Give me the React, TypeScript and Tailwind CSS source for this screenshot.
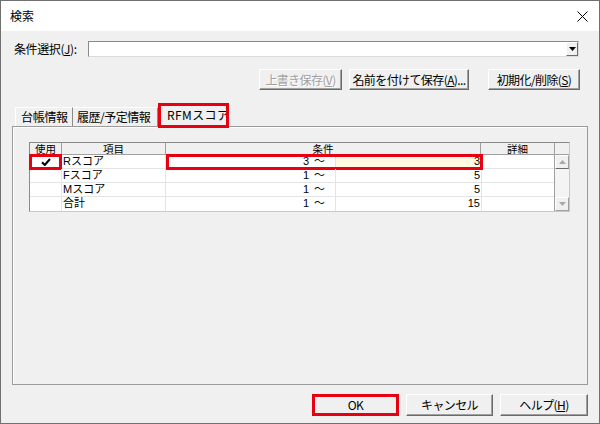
import React from 'react';

const font = "font-['Noto_Sans_CJK_JP','Noto_Sans_CJK_SC',sans-serif]";
const gridFont = "font-['Liberation_Sans','Noto_Sans_CJK_JP',sans-serif]";

const RedBox = ({ className = '' }: { className?: string }) => (
  <div className={`pointer-events-none absolute border-[3px] border-[#e60012] ${className}`} />
);

const Btn = ({ children, w, disabled = false }: { children: React.ReactNode; w: string; disabled?: boolean }) => (
  <div
    className={`${w} h-full flex items-center justify-center whitespace-nowrap bg-[#f0f0f0] border border-t-white border-l-white border-r-[#6b6b6b] border-b-[#6b6b6b] shadow-[inset_-1px_-1px_0_#a0a0a0] text-[12px] leading-none tracking-[-0.6px] ${
      disabled ? 'text-[#a0a0a0] [text-shadow:1px_1px_0_#fff]' : 'text-black'
    }`}
  >
    {children}
  </div>
);

const Tri = ({ up, color }: { up?: boolean; color: string }) => (
  <svg width="7" height="4" viewBox="0 0 7 4">
    <path d={up ? 'M0 4 L3.5 0 L7 4 Z' : 'M0 0 L7 0 L3.5 4 Z'} fill={color} />
  </svg>
);

const rows = [
  { used: true, name: 'Rスコア', from: '3', to: '3' },
  { used: false, name: 'Fスコア', from: '1', to: '5' },
  { used: false, name: 'Mスコア', from: '1', to: '5' },
  { used: false, name: '合計', from: '1', to: '15' },
];

const Check = () => (
  <svg width="10" height="8" viewBox="0 0 10 8">
    <path d="M1 4.2 L3.8 7 L9 1" stroke="#000" strokeWidth="2" fill="none" />
  </svg>
);

export default function App() {
  return (
    <div className={`w-[600px] h-[424px] border border-[#707070] flex flex-col ${font} text-black overflow-hidden`}>
      {/* Title bar */}
      <div className="h-[30px] bg-white flex items-center justify-between pl-[9px] pr-[11px]">
        <span className="text-[12px] leading-none">検索</span>
        <svg width="11" height="11" viewBox="0 0 11 11">
          <path d="M0.5 0.5 L10.5 10.5 M10.5 0.5 L0.5 10.5" stroke="#000" strokeWidth="1" />
        </svg>
      </div>

      <div className="flex-1 bg-[#f0f0f0] flex flex-col">
        {/* Condition select */}
        <div className="mt-[10px] h-[16px] flex items-center">
          <span className="ml-[13px] w-[74px] text-[12px] leading-none whitespace-nowrap tracking-[-0.4px]">
            条件選択(<span className="underline">J</span>):
          </span>
          <div className="w-[491px] h-full bg-white border border-t-[#8a8a8a] border-l-[#8a8a8a] border-r-[#dcdcdc] border-b-[#dcdcdc] flex justify-end">
            <div className="w-[12px] h-full flex items-center justify-center bg-[#f0f0f0] border border-t-white border-l-white border-r-[#6b6b6b] border-b-[#6b6b6b]">
              <Tri color="#000" />
            </div>
          </div>
        </div>

        {/* Action buttons */}
        <div className="mt-[12px] h-[21px] flex justify-end gap-[7px] pr-[19px]">
          <Btn w="w-[83px]" disabled>
            上書き保存(<span className="underline">V</span>)
          </Btn>
          <Btn w="w-[120px]">
            名前を付けて保存(<span className="underline">A</span>)...
          </Btn>
          <div className="w-[5px]" />
          <Btn w="w-[92px]">
            初期化/削除(<span className="underline">S</span>)
          </Btn>
        </div>

        {/* Tabs */}
        <div className="mt-[12px] h-[24px] flex items-end pl-[14px] relative z-10 whitespace-nowrap">
          <div className="h-[19px] w-[58px] flex items-center pl-[5px] text-[12px] leading-none tracking-[-0.3px] border-l border-t border-l-white border-t-white border-r border-r-[#8a8a8a]">
            台帳情報
          </div>
          <div className="h-[19px] w-[85px] flex items-center pl-[4px] text-[12px] leading-none tracking-[-0.5px] border-t border-t-white border-r border-r-[#8a8a8a]">
            履歴/予定情報
          </div>
          <div className="relative h-[24px] w-[71px] -mb-px flex items-center pl-[8px] pb-[2px] bg-[#f0f0f0] text-[12px] leading-none tracking-[0.4px] border-l border-t border-l-white border-t-white border-r border-r-[#8a8a8a]">
            RFMスコア
            <RedBox className="-left-[1px] -top-[1px] -right-[1px] -bottom-[1px]" />
          </div>
        </div>

        {/* Tab panel */}
        <div className="ml-[11px] w-[576px] h-[259px] border border-[#9a9a9a] shadow-[inset_1px_1px_0_#fff] flex flex-col">
          <div className={`ml-[16px] mt-[15px] w-[541px] border border-t-[#8a8a8a] border-l-[#8a8a8a] border-r-[#c8c8c8] border-b-[#c8c8c8] flex ${gridFont}`}>
            <div className="w-[524px] flex flex-col">
              {/* Header */}
              <div className="h-[12px] flex bg-[#f0f0f0] text-[10.5px] leading-[12px] border-b border-[#a0a0a0]">
                <div className="w-[32px] flex justify-center border-r border-[#a0a0a0]">使用</div>
                <div className="w-[104px] flex justify-center border-r border-[#a0a0a0]">項目</div>
                <div className="w-[315px] flex justify-center border-r border-[#a0a0a0]">条件</div>
                <div className="w-[73px] flex justify-center">詳細</div>
              </div>
              {/* Rows */}
              {rows.map((r, i) => (
                <div key={r.name} className="h-[14px] flex bg-white text-[11px] leading-[13px] border-b border-[#e4e4e4] last:border-b-0">
                  <div className="relative w-[32px] flex items-center justify-center border-r border-[#e4e4e4]">
                    {r.used && <Check />}
                    {i === 0 && <RedBox className="-left-[1px] -top-[1px] right-[-1px] -bottom-[2px]" />}
                  </div>
                  <div className="w-[104px] pl-[1px] border-r border-[#e4e4e4]">{r.name}</div>
                  <div className="relative w-[315px] flex">
                    <div className="w-[170px] flex justify-end pr-[10px] gap-[5px] border-r border-[#e4e4e4]">
                      <span>{r.from}</span>
                      <span>〜</span>
                    </div>
                    <div className={`w-[145px] text-right pr-[1px] ${i === 0 ? 'bg-[#fffbe3]' : ''}`}>{r.to}</div>
                    {i === 0 && <RedBox className="left-0 -top-[1px] -right-[2px] -bottom-[2px]" />}
                  </div>
                  <div className="w-[73px] border-l border-[#e4e4e4]" />
                </div>
              ))}
            </div>
            {/* Scrollbar */}
            <div className="w-[15px] flex flex-col bg-[#f0f0f0] border-l border-[#a0a0a0]">
              <div className="h-[12px] border-b border-[#a0a0a0]" />
              <div className="h-[14px] flex items-center justify-center border border-t-white border-l-white border-r-[#a0a0a0] border-b-[#6b6b6b]">
                <Tri up color="#a8a8a8" />
              </div>
              <div className="flex-1 bg-[#f4f4f4]" />
              <div className="h-[14px] flex items-center justify-center border border-t-white border-l-white border-r-[#a0a0a0] border-b-[#a0a0a0]">
                <Tri color="#a8a8a8" />
              </div>
            </div>
          </div>
        </div>

        {/* Bottom buttons */}
        <div className="mt-[9px] h-[22px] flex justify-end gap-[7px] pr-[11px]">
          <div className="relative h-full">
            <Btn w="w-[87px]">OK</Btn>
            <RedBox className="inset-0" />
          </div>
          <Btn w="w-[87px]">キャンセル</Btn>
          <Btn w="w-[88px]">
            ヘルプ(<span className="underline">H</span>)
          </Btn>
        </div>
      </div>
    </div>
  );
}
